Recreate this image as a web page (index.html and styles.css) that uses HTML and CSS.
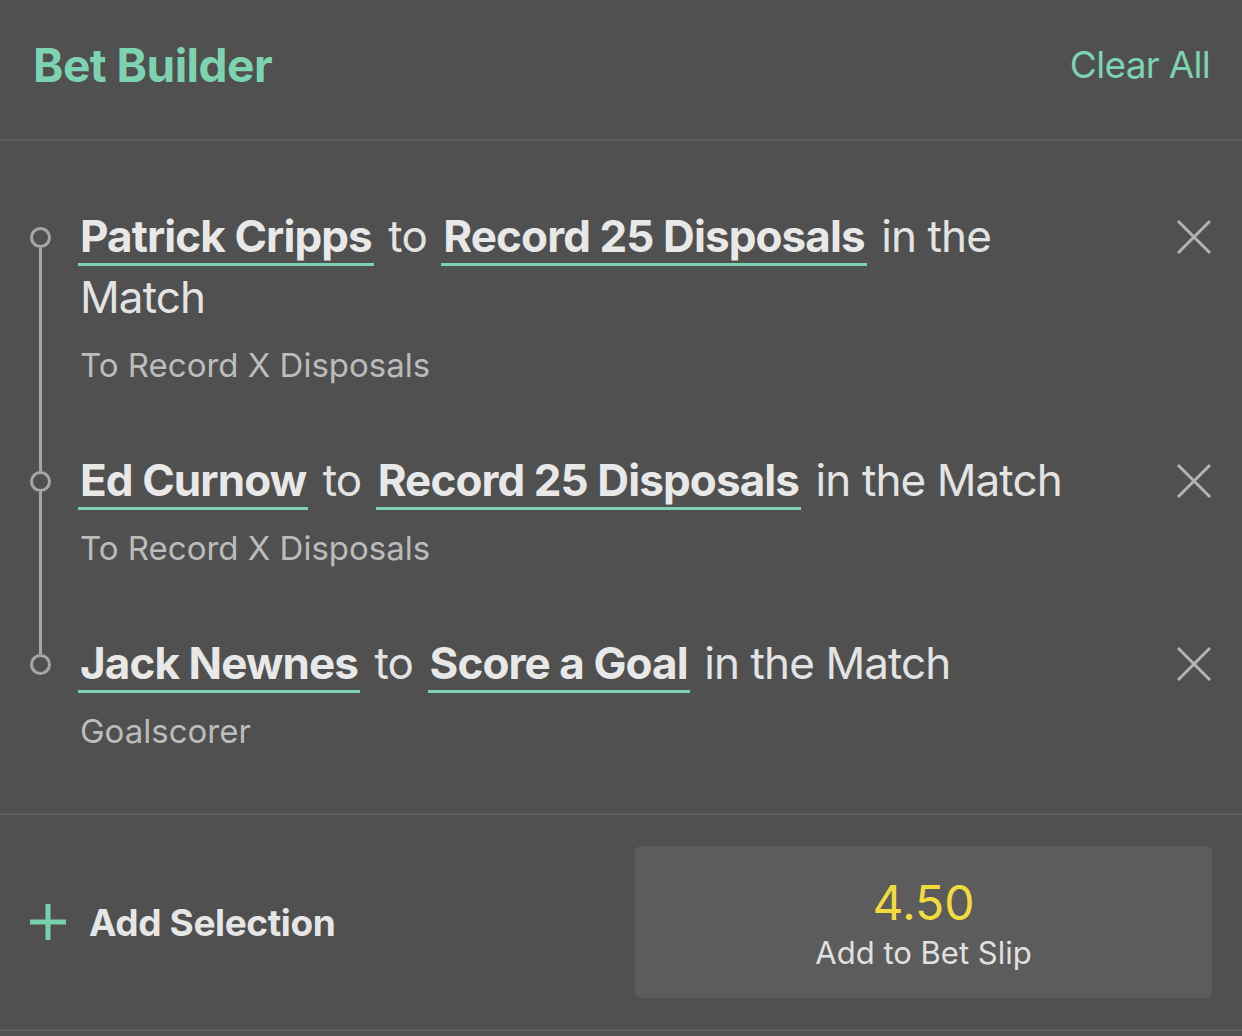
FILE: index.html
```html
<!DOCTYPE html>
<html lang="en">
<head>
<meta charset="utf-8">
<title>Bet Builder</title>
<link rel="stylesheet" href="styles.css">
</head>
<body>
<div class="panel">
  <header class="header">
    <h1 class="title">Bet Builder</h1>
    <a class="clear">Clear All</a>
  </header>

  <ul class="legs">
    <li class="leg leg-first">
      <div class="marker"><span class="seg-top"></span><span class="dot"></span><span class="seg-bottom"></span></div>
      <div class="content">
        <p class="main"><span class="pick">Patrick Cripps</span> to <span class="pick">Record 25 Disposals</span> in the Match</p>
        <p class="sub">To Record X Disposals</p>
      </div>
      <div class="remove">
        <svg viewBox="0 0 36 36" width="36" height="36"><path d="M2 2 L34 34 M34 2 L2 34" stroke="#b3b3b3" stroke-width="3" fill="none"/></svg>
      </div>
    </li>
    <li class="leg">
      <div class="marker"><span class="seg-top"></span><span class="dot"></span><span class="seg-bottom"></span></div>
      <div class="content">
        <p class="main"><span class="pick">Ed Curnow</span> to <span class="pick">Record 25 Disposals</span> in the Match</p>
        <p class="sub">To Record X Disposals</p>
      </div>
      <div class="remove">
        <svg viewBox="0 0 36 36" width="36" height="36"><path d="M2 2 L34 34 M34 2 L2 34" stroke="#b3b3b3" stroke-width="3" fill="none"/></svg>
      </div>
    </li>
    <li class="leg leg-last">
      <div class="marker"><span class="seg-top"></span><span class="dot"></span><span class="seg-bottom"></span></div>
      <div class="content">
        <p class="main"><span class="pick">Jack Newnes</span> to <span class="pick">Score a Goal</span> in the Match</p>
        <p class="sub">Goalscorer</p>
      </div>
      <div class="remove">
        <svg viewBox="0 0 36 36" width="36" height="36"><path d="M2 2 L34 34 M34 2 L2 34" stroke="#b3b3b3" stroke-width="3" fill="none"/></svg>
      </div>
    </li>
  </ul>

  <footer class="footer">
    <a class="add">
      <svg class="plus" viewBox="0 0 36 36" width="36" height="36"><path d="M18 0 V36 M0 18 H36" stroke="#79d0ad" stroke-width="5" fill="none"/></svg>
      <span class="add-label">Add Selection</span>
    </a>
    <button class="slip">
      <span class="odds">4.50</span>
      <span class="slip-label">Add to Bet Slip</span>
    </button>
  </footer>
</div>
</body>
</html>
```

FILE: styles.css
```css
* { box-sizing: border-box; }

html, body {
  margin: 0;
  padding: 0;
  background: #505050;
}

body {
  font-family: Inter, "Noto Sans", "Liberation Sans", sans-serif;
  color: #e6e6e6;
}

.panel {
  width: 1242px;
  background: #505050;
}

.header {
  height: 141px;
  display: flex;
  align-items: center;
  justify-content: space-between;
  padding: 0 32px 10px 33px;
  border-bottom: 2px solid #5f5f5f;
}

.title {
  margin: 0;
  font-size: 46px;
  font-weight: 700;
  letter-spacing: -0.5px;
  color: #7dd3b1;
}

.clear {
  font-size: 37px;
  font-weight: 400;
  color: #7dd3b1;
  letter-spacing: -0.7px;
}

.legs {
  list-style: none;
  margin: 0;
  padding: 65px 0 0 0;
  border-bottom: 2px solid #5f5f5f;
}

.leg {
  display: grid;
  grid-template-columns: 80px 1030px 1fr;
}

.marker {
  display: flex;
  flex-direction: column;
  align-items: center;
}

.seg-top {
  width: 3px;
  height: 21px;
  background: #a6a6a6;
}

.dot {
  width: 21px;
  height: 21px;
  border: 3px solid #a6a6a6;
  border-radius: 50%;
  flex: none;
}

.seg-bottom {
  width: 3px;
  flex: 1;
  background: #a6a6a6;
}

.leg-first .seg-top,
.leg-last .seg-bottom {
  background: transparent;
}

.content {
  padding-bottom: 65px;
}

.leg-last .content {
  padding-bottom: 62px;
}

.main {
  margin: 0;
  font-size: 44px;
  line-height: 61px;
  letter-spacing: -0.9px;
  color: #e3e3e3;
}

.pick {
  font-weight: 700;
  color: #e8e8e8;
  padding: 0 2px 0;
  margin: 0 3px;
  border-bottom: 3px solid #7dd3b1;
}

.pick:first-child {
  margin-left: -2px;
}

.sub {
  margin: 17px 0 0 0;
  font-size: 33px;
  line-height: 40px;
  color: #bcbcbc;
}

.remove {
  display: flex;
  justify-content: flex-end;
  padding: 13px 30px 0 0;
}

.remove svg {
  display: block;
}

.footer {
  display: flex;
  align-items: center;
  justify-content: space-between;
  padding: 31px 30px 31px 30px;
  border-bottom: 2px solid #5f5f5f;
}

.add {
  display: flex;
  align-items: center;
  gap: 23px;
}

.plus {
  display: block;
}

.add-label {
  font-size: 37px;
  font-weight: 700;
  color: #e6e6e6;
  letter-spacing: -0.4px;
}

.slip {
  width: 577px;
  height: 152px;
  border: none;
  border-radius: 6px;
  background: #5c5c5c;
  display: flex;
  flex-direction: column;
  align-items: center;
  justify-content: center;
  font-family: inherit;
  padding: 4px 0 0 0;
}

.odds {
  font-size: 48px;
  line-height: 56px;
  font-weight: 400;
  color: #f2dc3c;
}

.slip-label {
  font-size: 31px;
  line-height: 40px;
  color: #e0e0e0;
  margin-top: 2px;
}
```
